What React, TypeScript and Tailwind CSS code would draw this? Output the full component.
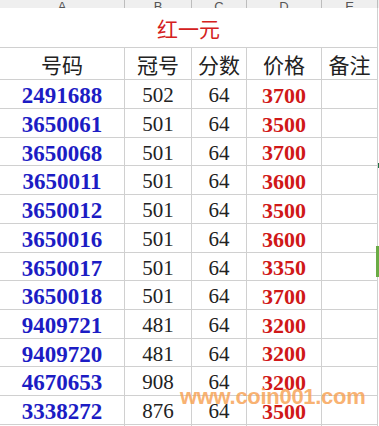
import React from "react";

const rows: [string, string, string, string][] = [
  ["2491688", "502", "64", "3700"],
  ["3650061", "501", "64", "3500"],
  ["3650068", "501", "64", "3700"],
  ["3650011", "501", "64", "3600"],
  ["3650012", "501", "64", "3500"],
  ["3650016", "501", "64", "3600"],
  ["3650017", "501", "64", "3350"],
  ["3650018", "501", "64", "3700"],
  ["9409721", "481", "64", "3200"],
  ["9409720", "481", "64", "3200"],
  ["4670653", "908", "64", "3200"],
  ["3338272", "876", "64", "3500"],
];

const heights = ["h-[29px]", "h-[29px]", "h-[28px]", "h-[29px]", "h-[29px]", "h-[29px]", "h-[28px]", "h-[29px]", "h-[29px]", "h-[28px]", "h-[29px]", "h-[29px]"];

const serif = { fontFamily: '"Liberation Serif", "Times New Roman", serif' };
const cjk = { fontFamily: '"Noto Sans CJK SC", "Noto Sans", sans-serif' };

const cols = "grid grid-cols-[125px_67px_55px_75px_56px_1px]";
const cell = "flex items-center justify-center border-r border-b border-[#d0d0d0]";

export default function App() {
  return (
    <div className="relative w-[379px] h-[426px] overflow-hidden bg-white">
      {/* column letters */}
      <div className={`${cols} h-[8px] bg-[#efefef] overflow-hidden text-[13px] text-[#555]`} style={{ fontFamily: '"Liberation Sans", Arial, sans-serif' }}>
        {["A", "B", "C", "D", "E"].map((l) => (
          <div key={l} className="flex items-end justify-center border-r border-b border-[#bdbdbd] pb-[2px] leading-none">
            {l}
          </div>
        ))}
        <div className="border-b border-[#bdbdbd]" />
      </div>
      {/* title */}
      <div className="flex h-[40px] w-[378px] items-center justify-center border-b border-r border-[#d0d0d0] pt-[1px]">
        <span className="text-[21px] text-[#d42020] leading-none" style={cjk}>
          红一元
        </span>
      </div>
      {/* header */}
      <div className={`${cols} h-[32px] text-[21px] text-[#222]`} style={cjk}>
        {["号码", "冠号", "分数", "价格", "备注"].map((h) => (
          <div key={h} className={`${cell} leading-none pt-[1px]`}>
            {h}
          </div>
        ))}
        <div />
      </div>
      {/* data */}
      {rows.map((r, i) => (
        <div key={r[0]} className={`${cols} ${heights[i]}`} style={serif}>
          <div className={`${cell} pt-[3px] text-[23px] font-bold text-[#1c1cc4] leading-none`}>{r[0]}</div>
          <div className={`${cell} pt-[3px] text-[21px] text-[#222] leading-none`}>{r[1]}</div>
          <div className={`${cell} pt-[3px] text-[21px] text-[#222] leading-none`}>{r[2]}</div>
          <div className={`${cell} pt-[3px] text-[22px] font-bold text-[#d01818] leading-none`}>{r[3]}</div>
          <div className={cell} />
          <div />
        </div>
      ))}
      <div className={`${cols} h-[10px]`}>
        <div className={cell} />
        <div className={cell} />
        <div className={cell} />
        <div className={cell} />
        <div className={cell} />
        <div />
      </div>

      {/* green selection marks on right edge */}
      <div className="absolute left-[378px] top-[163px] h-[5px] w-[1px] bg-[#217346]" />
      <div className="absolute left-[376px] top-[246px] h-[31px] w-[3px] bg-[#6aab45]" />

      {/* watermark */}
      <div
        className="absolute left-[180px] top-[386px] text-[22px] font-bold leading-none tracking-[-0.3px] text-[#f7a050] opacity-80"
        style={{ fontFamily: '"Liberation Sans", Arial, sans-serif' }}
      >
        www.coin001.com
      </div>
    </div>
  );
}
